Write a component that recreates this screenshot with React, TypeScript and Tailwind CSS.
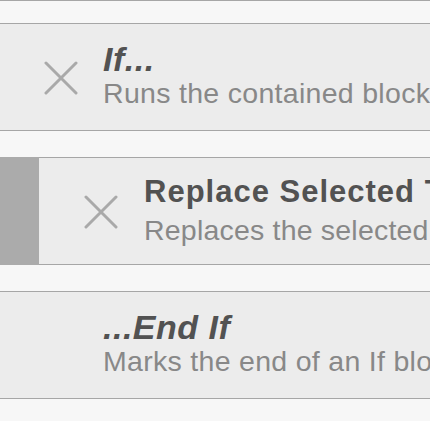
import React from 'react';

interface Action {
  title: string;
  desc: string;
  italic?: boolean;
  removable?: boolean;
  nested?: boolean;
}

const actions: Action[] = [
  { title: 'If...', desc: 'Runs the contained blocks when a condition is met', italic: true, removable: true },
  { title: 'Replace Selected Text', desc: 'Replaces the selected text with new text', removable: true, nested: true },
  { title: '...End If', desc: 'Marks the end of an If block', italic: true },
];

const CloseIcon: React.FC<{ hidden?: boolean }> = ({ hidden }) => (
  <svg
    width="34"
    height="34"
    viewBox="0 0 34 34"
    className={hidden ? 'invisible shrink-0' : 'shrink-0'}
  >
    <path d="M2 2 L32 32 M32 2 L2 32" stroke="#a9a9a9" strokeWidth="3" strokeLinecap="round" />
  </svg>
);

const ActionRow: React.FC<{ action: Action }> = ({ action }) => {
  return (
    <div className="flex h-[108px] w-full">
      {action.nested && <div className="w-[39px] shrink-0 bg-[#ababab]" />}
      <div className="flex flex-1 min-w-0 overflow-hidden border-y border-[#a6a6a6] bg-[#ececec]">
        <div className={action.nested ? 'flex items-center pl-[45px] pt-[2px]' : 'flex items-center pl-[44px] pt-[2px]'}>
          <CloseIcon hidden={!action.removable} />
        </div>
        <div
          className={
            action.nested
              ? 'flex flex-col whitespace-nowrap pl-[26px] pt-[16px]'
              : 'flex flex-col whitespace-nowrap pl-[25px] pt-[17px]'
          }
        >
          {action.italic ? (
            <div className="text-[34px] leading-[36px] font-bold italic text-[#525252] tracking-[0.5px]">
              {action.title}
            </div>
          ) : (
            <div className="text-[31px] leading-[36px] font-bold text-[#525252] tracking-[1px]">
              {action.title}
            </div>
          )}
          <div
            className={
              action.nested
                ? 'mt-[4px] text-[28.5px] leading-[32px] text-[#888888] tracking-[0.2px]'
                : 'mt-[0px] text-[28.5px] leading-[32px] text-[#888888] tracking-[0.3px]'
            }
          >
            {action.desc}
          </div>
        </div>
      </div>
    </div>
  );
};

export default function App() {
  return (
    <div
      className="w-[430px] h-[421px] overflow-hidden bg-[#f7f7f7] flex flex-col"
      style={{ fontFamily: '"Liberation Sans", Arial, sans-serif' }}
    >
      <div className="h-[1px] shrink-0 bg-[#a6a6a6]" />
      <div className="flex flex-col gap-[26px] pt-[22px]">
        {actions.map((a) => (
          <ActionRow key={a.title} action={a} />
        ))}
      </div>
    </div>
  );
}
